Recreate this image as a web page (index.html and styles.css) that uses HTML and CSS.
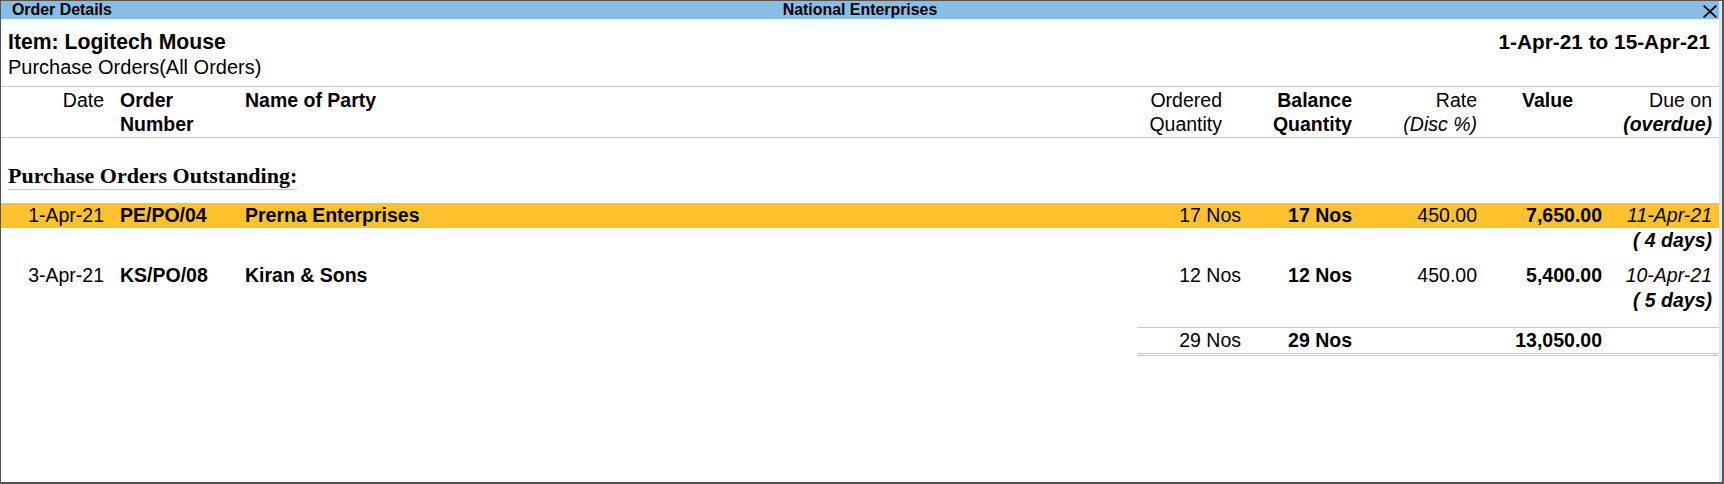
FILE: index.html
```html
<!DOCTYPE html>
<html>
<head>
<meta charset="utf-8">
<title>Order Details</title>
<link rel="stylesheet" href="styles.css">
</head>
<body>
<div class="window">
  <div class="inner">
    <div class="titlebar">
      <span class="tb-left">Order Details</span>
      <span class="tb-center">National Enterprises</span>
      <span class="tb-right">
        <svg class="close" width="14" height="13" viewBox="0 0 14 13"><path d="M0.6 0.6 L13.4 12.4 M13.4 0.6 L0.6 12.4" stroke="#000" stroke-width="1.7" fill="none"/></svg>
      </span>
    </div>

    <div class="info">
      <div class="info-row">
        <span class="item">Item: Logitech Mouse</span>
        <span class="period">1-Apr-21 to 15-Apr-21</span>
      </div>
      <div class="subtitle">Purchase Orders(All Orders)</div>
    </div>

    <div class="grid head">
      <div class="c-date">Date</div>
      <div class="c-order b">Order<br>Number</div>
      <div class="c-party b">Name of Party</div>
      <div class="c-ord h-ord">Ordered<br>Quantity</div>
      <div class="c-bal b">Balance<br>Quantity</div>
      <div class="c-rate">Rate<br><i>(Disc %)</i></div>
      <div class="c-val b h-val">Value</div>
      <div class="c-due">Due on<br><b><i>(overdue)</i></b></div>
    </div>

    <div class="section"><span class="section-title">Purchase Orders Outstanding:</span></div>

    <div class="entry">
      <div class="grid line hl">
        <div class="c-date">1-Apr-21</div>
        <div class="c-order b">PE/PO/04</div>
        <div class="c-party b">Prerna Enterprises</div>
        <div class="c-ord">17 Nos</div>
        <div class="c-bal b">17 Nos</div>
        <div class="c-rate">450.00</div>
        <div class="c-val b">7,650.00</div>
        <div class="c-due i">11-Apr-21</div>
      </div>
      <div class="grid line">
        <div class="c-due bi span-due">( 4 days)</div>
      </div>
    </div>

    <div class="entry">
      <div class="grid line">
        <div class="c-date">3-Apr-21</div>
        <div class="c-order b">KS/PO/08</div>
        <div class="c-party b">Kiran &amp; Sons</div>
        <div class="c-ord">12 Nos</div>
        <div class="c-bal b">12 Nos</div>
        <div class="c-rate">450.00</div>
        <div class="c-val b">5,400.00</div>
        <div class="c-due i">10-Apr-21</div>
      </div>
      <div class="grid line">
        <div class="c-due bi span-due">( 5 days)</div>
      </div>
    </div>

    <div class="totals">
      <div class="t-ord">29 Nos</div>
      <div class="t-bal b">29 Nos</div>
      <div class="t-rate"></div>
      <div class="t-val b">13,050.00</div>
      <div class="t-due"></div>
    </div>
  </div>
</div>
</body>
</html>
```

FILE: styles.css
```css
* { box-sizing: border-box; }

html, body {
  margin: 0;
  padding: 0;
  background: #ffffff;
}

body {
  font-family: "Liberation Sans", Arial, sans-serif;
  color: #000;
  font-size: 19.5px;
}

.window {
  width: 1724px;
  height: 484px;
  border-top: 1px solid #555555;
  border-left: 1px solid #555555;
  border-right: 2px solid #555555;
  border-bottom: 2px solid #555555;
}

.inner {
  height: 100%;
  border-right: 3px solid #d8e8f6;
}

/* title bar */
.titlebar {
  height: 18px;
  background: #88bde6;
  display: grid;
  grid-template-columns: 1fr auto 1fr;
  align-items: center;
  font-weight: bold;
  font-size: 15.9px;
  line-height: 18px;
}
.tb-left { padding-left: 11px; }
.tb-center { text-align: center; }
.tb-right {
  display: flex;
  justify-content: flex-end;
  padding-right: 2px;
  padding-top: 2px;
}
.close { display: block; }

/* info block */
.info {
  padding: 9px 9px 7px 7px;
  border-bottom: 1px solid #c8c8c8;
}
.info-row {
  display: flex;
  justify-content: space-between;
  font-weight: bold;
  font-size: 21.2px;
  line-height: 27px;
}
.period { font-size: 20.8px; }
.subtitle {
  font-size: 20px;
  line-height: 24px;
}

/* grid */
.grid {
  display: grid;
  grid-template-columns: 111px 124px 864px 150px 110px 125px 125px 109px;
  line-height: 25px;
}
.head {
  padding-top: 1px;
  line-height: 24px;
  border-bottom: 1px solid #c8c8c8;
  padding-bottom: 1px;
}

.c-date { text-align: right; padding-right: 8px; }
.c-order { padding-left: 8px; }
.c-party { padding-left: 9px; }
.c-ord { text-align: right; padding-right: 9px; }
.c-bal { text-align: right; padding-right: 8px; }
.c-rate { text-align: right; padding-right: 8px; }
.c-val { text-align: right; padding-right: 8px; }
.c-due { text-align: right; padding-right: 7px; }

.h-ord { padding-right: 28px; }
.h-val { padding-right: 37px; }

.span-due { grid-column: 8; }

.b { font-weight: bold; }
.i { font-style: italic; }
.bi { font-weight: bold; font-style: italic; }

/* section heading */
.section {
  margin-top: 26px;
  padding-left: 7px;
  margin-bottom: 13px;
  line-height: 24px;
}
.section-title {
  display: inline-block;
  font-family: "Liberation Serif", "Times New Roman", serif;
  font-weight: bold;
  font-size: 22px;
  padding-bottom: 1px;
  border-bottom: 1px solid #c8c8c8;
}

.hl { background: #fec22f; }

.entry { padding-bottom: 10px; }

/* totals */
.totals {
  margin-left: 1136px;
  margin-top: 4px;
  display: grid;
  grid-template-columns: 113px 110px 125px 125px 109px;
  line-height: 25px;
  border-top: 1px solid #c8c8c8;
  border-bottom: 3px double #c8c8c8;
}
.t-ord { text-align: right; padding-right: 9px; }
.t-bal { text-align: right; padding-right: 8px; }
.t-val { text-align: right; padding-right: 8px; }
```
